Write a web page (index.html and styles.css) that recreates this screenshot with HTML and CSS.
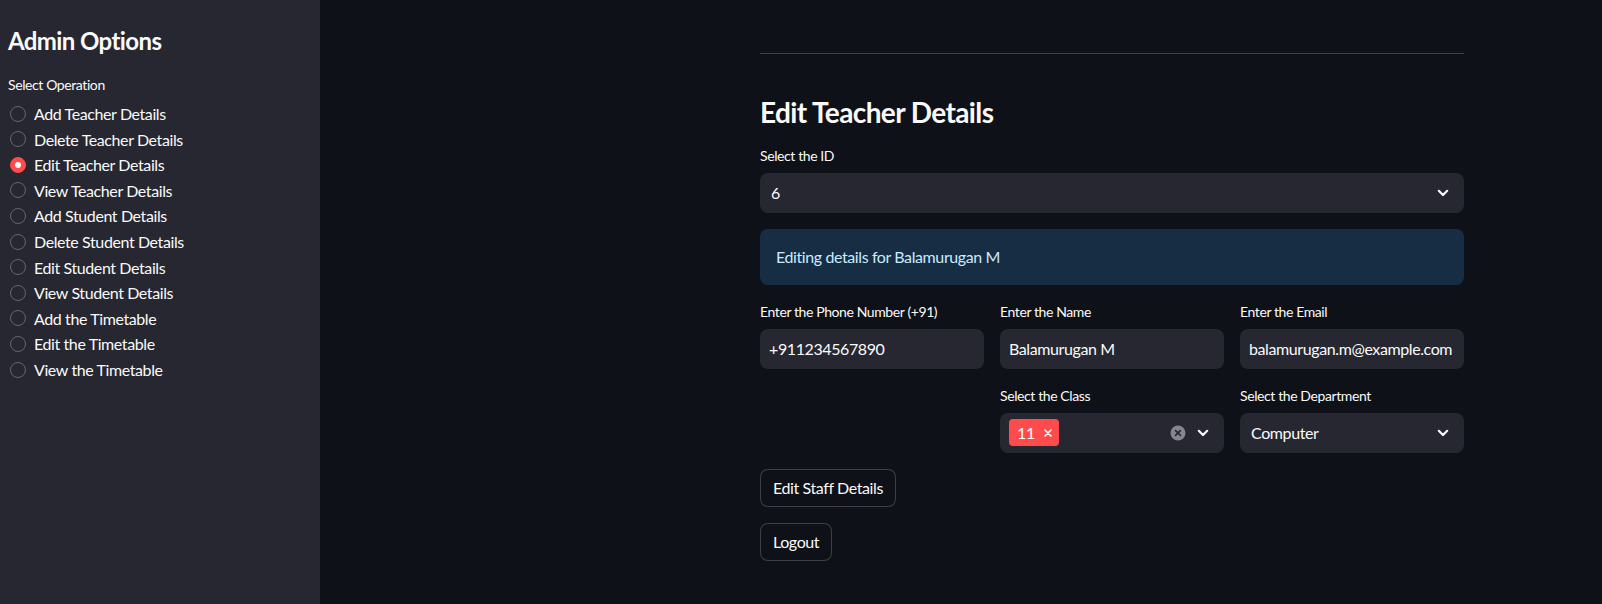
FILE: index.html
```html
<!DOCTYPE html>
<html lang="en">
<head>
<meta charset="utf-8">
<title>Admin</title>
<link rel="stylesheet" href="styles.css">
</head>
<body>
<div class="app">
  <aside class="sidebar">
    <h2 class="side-title">Admin Options</h2>
    <div class="label">Select Operation</div>
    <div class="radio-group">
      <div class="radio"><span class="dot"></span><span>Add Teacher Details</span></div>
      <div class="radio"><span class="dot"></span><span>Delete Teacher Details</span></div>
      <div class="radio"><span class="dot checked"></span><span>Edit Teacher Details</span></div>
      <div class="radio"><span class="dot"></span><span>View Teacher Details</span></div>
      <div class="radio"><span class="dot"></span><span>Add Student Details</span></div>
      <div class="radio"><span class="dot"></span><span>Delete Student Details</span></div>
      <div class="radio"><span class="dot"></span><span>Edit Student Details</span></div>
      <div class="radio"><span class="dot"></span><span>View Student Details</span></div>
      <div class="radio"><span class="dot"></span><span>Add the Timetable</span></div>
      <div class="radio"><span class="dot"></span><span>Edit the Timetable</span></div>
      <div class="radio"><span class="dot"></span><span>View the Timetable</span></div>
    </div>
  </aside>
  <main class="main">
    <div class="content">
      <hr class="divider">
      <h3 class="title">Edit Teacher Details</h3>
      <div class="field">
        <div class="label">Select the ID</div>
        <div class="box select">
          <span class="value">6</span>
          <svg class="chev" viewBox="0 0 12 8" width="12" height="8"><path d="M1.8 1.8 6 6l4.2-4.2" fill="none" stroke="#fafafa" stroke-width="2.2" stroke-linecap="round" stroke-linejoin="round"/></svg>
        </div>
      </div>
      <div class="info">Editing details for Balamurugan M</div>
      <div class="row">
        <div class="field">
          <div class="label">Enter the Phone Number (+91)</div>
          <div class="box input"><div class="clip">+911234567890</div></div>
        </div>
        <div class="field">
          <div class="label">Enter the Name</div>
          <div class="box input"><div class="clip">Balamurugan M</div></div>
        </div>
        <div class="field">
          <div class="label">Enter the Email</div>
          <div class="box input"><div class="clip">balamurugan.m@example.com</div></div>
        </div>
      </div>
      <div class="row">
        <div class="field"></div>
        <div class="field">
          <div class="label">Select the Class</div>
          <div class="box multi">
            <span class="tag">11<svg class="tag-x" viewBox="0 0 8 8" width="8" height="8"><path d="M1 1l6 6M7 1L1 7" stroke="#fff" stroke-width="1.6" stroke-linecap="round"/></svg></span>
            <span class="spacer"></span>
            <svg class="clear" viewBox="0 0 16 16" width="16" height="16"><circle cx="8" cy="8" r="7.5" fill="#85868e"/><path d="M5.6 5.6l4.8 4.8M10.4 5.6l-4.8 4.8" stroke="#262730" stroke-width="1.7" stroke-linecap="round"/></svg>
            <svg class="chev" viewBox="0 0 12 8" width="12" height="8"><path d="M1.8 1.8 6 6l4.2-4.2" fill="none" stroke="#fafafa" stroke-width="2.2" stroke-linecap="round" stroke-linejoin="round"/></svg>
          </div>
        </div>
        <div class="field">
          <div class="label">Select the Department</div>
          <div class="box select">
            <span class="value">Computer</span>
            <svg class="chev" viewBox="0 0 12 8" width="12" height="8"><path d="M1.8 1.8 6 6l4.2-4.2" fill="none" stroke="#fafafa" stroke-width="2.2" stroke-linecap="round" stroke-linejoin="round"/></svg>
          </div>
        </div>
      </div>
      <div class="btn-row"><button class="btn">Edit Staff Details</button></div>
      <div class="btn-row"><button class="btn">Logout</button></div>
    </div>
  </main>
</div>
</body>
</html>
```
FILE: styles.css
```css
* { box-sizing: border-box; }
html, body {
  margin: 0;
  height: 100%;
  background: #0e1117;
  color: #fafafa;
  font-family: Lato, "Open Sans", sans-serif;
  font-size: 16px;
  letter-spacing: -0.4px;
}
.app {
  display: flex;
  height: 604px;
  overflow: hidden;
}
.sidebar {
  width: 320px;
  flex: none;
  background: #262730;
  padding: 27px 8px 0 8px;
}
.side-title {
  margin: 0 0 18px;
  font-size: 24px;
  line-height: 1.2;
  font-weight: 700;
  letter-spacing: -0.6px;
}
.label {
  font-size: 14px;
  line-height: 22px;
  margin-bottom: 6px;
  color: #fafafa;
}
.sidebar .label { margin-bottom: 5px; }
.radio-group {
  display: flex;
  flex-direction: column;
}
.radio {
  display: flex;
  align-items: center;
  gap: 8px;
  height: 25.6px;
  padding-left: 2px;
  font-size: 16px;
}
.dot {
  width: 16px;
  height: 16px;
  border-radius: 50%;
  border: 1px solid #65666e;
  flex: none;
  position: relative;
}
.dot.checked {
  background: #ff4b4b;
  border-color: #ff4b4b;
}
.dot.checked::after {
  content: "";
  position: absolute;
  left: 50%;
  top: 50%;
  width: 6px;
  height: 6px;
  margin: -3px 0 0 -3px;
  border-radius: 50%;
  background: #fff;
}
.main {
  flex: 1;
  padding-left: 440px;
}
.content {
  width: 704px;
  padding-top: 53px;
  display: flex;
  flex-direction: column;
  gap: 16px;
}
.divider {
  margin: 0;
  border: 0;
  height: 1px;
  background: rgba(250, 250, 250, 0.2);
}
.title {
  margin: 26px 0 -1px;
  font-size: 28px;
  line-height: 1.2;
  font-weight: 700;
  letter-spacing: -0.6px;
}
.field { display: flex; flex-direction: column; min-width: 0; }
.box {
  height: 40px;
  background: #262730;
  border-radius: 8px;
  display: flex;
  align-items: center;
  font-size: 16px;
}
.select { padding: 0 15px 0 11px; }
.select .value { flex: 1; }
.input { padding: 0 6px 0 9px; }
.clip {
  overflow: hidden;
  white-space: nowrap;
  width: 100%;
}
.chev { flex: none; }
.info {
  background: #172d43;
  color: #c7ebff;
  border-radius: 8px;
  padding: 16px;
  line-height: 24px;
  font-size: 16px;
}
.row {
  display: grid;
  grid-template-columns: repeat(3, 1fr);
  gap: 16px;
}
.multi { padding: 0 15px 0 9px; gap: 0; }
.tag {
  background: #ff4b4b;
  color: #fff;
  border-radius: 4px;
  height: 27px;
  width: 50px;
  display: flex;
  align-items: center;
  padding: 0 0 0 8px;
  gap: 9px;
  font-size: 16px;
}
.tag-x { flex: none; }
.spacer { flex: 1; }
.clear { margin-right: 11px; flex: none; }
.btn-row { display: flex; }
.btn {
  font-family: inherit;
  font-size: 16px;
  letter-spacing: -0.4px;
  color: #fafafa;
  background: #0e1117;
  border: 1px solid rgba(250, 250, 250, 0.2);
  border-radius: 8px;
  padding: 0 12px;
  height: 38.4px;
  line-height: 1.6;
}
```
